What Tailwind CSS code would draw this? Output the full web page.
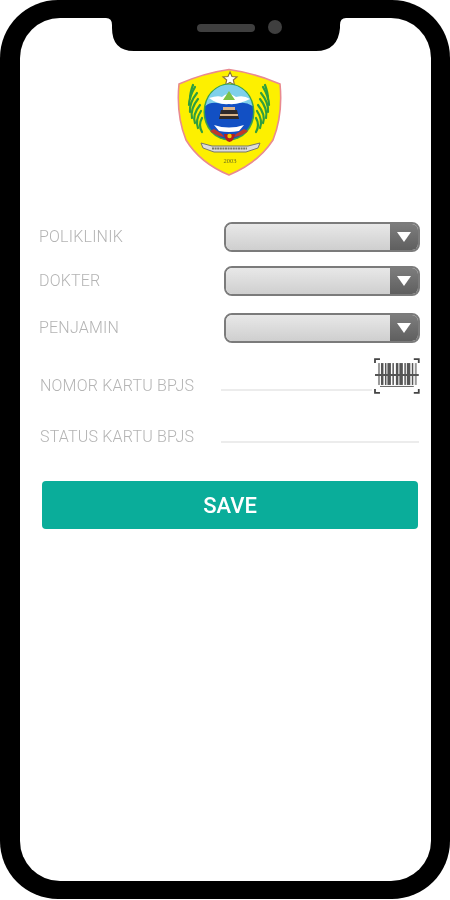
<!DOCTYPE html>
<html lang="id">
<head>
<meta charset="utf-8">
<title>Form</title>
<script src="https://cdn.jsdelivr.net/npm/@tailwindcss/browser@4"></script>
</head>
<body class="bg-white font-['Roboto',sans-serif]">
<div class="relative w-[450px] h-[899px] bg-black rounded-[58px] pt-[18px] pl-[20px] pr-[19px] pb-[18px]">
  <!-- notch -->
  <svg class="absolute left-[100px] top-0 w-[250px] h-[60px] blur-[0.4px]" viewBox="0 0 250 60">
    <path d="M5 0H245V18H246Q240 18 240 25V28Q238 51 216 51H34Q12 51 12 28V25Q12 18 6 18H5Z" fill="#000"/>
    <rect x="97" y="24" width="58" height="8" rx="4" fill="#3f3f3f"/>
    <circle cx="175" cy="27" r="7" fill="#3f3f3f"/>
  </svg>
  <div class="w-full h-full bg-white rounded-[40px] overflow-hidden">
    <!-- logo -->
    <div class="pt-[37px] pl-[140px] h-[204px]">
      <svg class="w-[140px] h-[130px] blur-[0.7px]" viewBox="0 0 140 130">
        <path d="M19 29Q44 18 69 14.5Q95 18 120 29Q123 60 113 85Q98 108 69 120Q40 108 26 85Q16 60 19 29Z" fill="#fdf000" stroke="#e98a90" stroke-width="1.6"/>
        <!-- wings -->
        <g fill="none" stroke="#2f9e3e" stroke-width="2.2" stroke-linecap="round">
          <path d="M33 30Q30 38 30 44"/>
          <path d="M35 32Q29 42 29 50"/>
          <path d="M37 38Q29 48 30 57"/>
          <path d="M38 44Q30 54 32 63"/>
          <path d="M40 50Q32 60 35 68"/>
          <path d="M41 56Q35 65 38 73"/>
          <path d="M42 63Q38 70 42 77"/>
          <path d="M105 30Q108 38 108 44"/>
          <path d="M103 32Q109 42 109 50"/>
          <path d="M101 38Q109 48 108 57"/>
          <path d="M100 44Q108 54 106 63"/>
          <path d="M98 50Q106 60 103 68"/>
          <path d="M97 56Q103 65 100 73"/>
          <path d="M96 63Q100 70 96 77"/>
        </g>
        <!-- star -->
        <path d="M70 17L72 21.5L77 22L73.3 25L74.5 30L70 27.3L65.5 30L66.7 25L63 22L68 21.5Z" fill="#fff" stroke="#8a6d3b" stroke-width="1.1"/>
        <!-- emblem -->
        <ellipse cx="69" cy="57" rx="25.5" ry="28.5" fill="#3aa24a"/>
        <ellipse cx="69" cy="57" rx="24" ry="27" fill="#1250c4"/>
        <path d="M45.5 51A24 27 0 0 1 92.5 51Q86 47 80 48Q75 49 69 49Q62 49 57 48Q50 47 45.5 51Z" fill="#7fd0ea"/>
        <path d="M49 43Q58 40 62 42Q68 36 76 42Q84 40 90 44Q78 50 69 49Q58 50 49 43Z" fill="#fff"/>
        <path d="M63 45L69 36L75 45Z" fill="#7cc243"/>
        <path d="M61 55H77L79 64H59Z" fill="#2f2a2a"/>
        <path d="M63 52H75V55H63ZM60 59H78V61H60Z" fill="#d9b48a"/>
        <path d="M54 70Q69 75 84 70L79 76Q69 78 59 76Z" fill="#fff"/>
        <path d="M50 76Q56 81 64 82L62 79L54 74ZM88 76Q82 81 74 82L76 79L84 74Z" fill="#c0392b"/>
        <path d="M64 79H75Q74 86 69.5 87Q65 86 64 79Z" fill="#b3201c"/>
        <circle cx="69.5" cy="81" r="2.2" fill="#f0d000"/>
        <!-- ribbon -->
        <path d="M41 88L52 91H88L100 88L98 93L86 97H54L43 93Z" fill="#ddd" stroke="#77776a" stroke-width="1"/>
        <path d="M52 93.5H87" stroke="#77776a" stroke-width="1.8" stroke-dasharray="2 .6"/>
        <text x="70" y="108" text-anchor="middle" font-family="'Liberation Serif',serif" font-size="6.5" fill="#6b6b1f">2003</text>
      </svg>
    </div>
    <!-- form -->
    <div class="flex flex-col text-[16px] font-light text-[#b4b4b4] tracking-[0.2px] blur-[0.5px]">
      <div class="flex items-center justify-between h-[30px] pl-[19px] pr-[11px]">
        <span>POLIKLINIK</span>
        <div class="flex w-[196px] h-[30px] rounded-[8px] border-2 border-[#7b7b7b] overflow-hidden">
          <div class="flex-1 bg-gradient-to-b from-[#e8e8e8] to-[#cfcfcf]"></div>
          <div class="flex items-center justify-center w-[28px] bg-gradient-to-b from-[#7d7d7d] to-[#5f5f5f]">
            <svg class="w-[14px] h-[10px]" viewBox="0 0 14 10"><path d="M0 0H14L7 10Z" fill="#fff"/></svg>
          </div>
        </div>
      </div>
      <div class="flex items-center justify-between h-[30px] mt-[14px] pl-[19px] pr-[11px]">
        <span>DOKTER</span>
        <div class="flex w-[196px] h-[30px] rounded-[8px] border-2 border-[#7b7b7b] overflow-hidden">
          <div class="flex-1 bg-gradient-to-b from-[#e8e8e8] to-[#cfcfcf]"></div>
          <div class="flex items-center justify-center w-[28px] bg-gradient-to-b from-[#7d7d7d] to-[#5f5f5f]">
            <svg class="w-[14px] h-[10px]" viewBox="0 0 14 10"><path d="M0 0H14L7 10Z" fill="#fff"/></svg>
          </div>
        </div>
      </div>
      <div class="flex items-center justify-between h-[30px] mt-[17px] pl-[19px] pr-[11px]">
        <span>PENJAMIN</span>
        <div class="flex w-[196px] h-[30px] rounded-[8px] border-2 border-[#7b7b7b] overflow-hidden">
          <div class="flex-1 bg-gradient-to-b from-[#e8e8e8] to-[#cfcfcf]"></div>
          <div class="flex items-center justify-center w-[28px] bg-gradient-to-b from-[#7d7d7d] to-[#5f5f5f]">
            <svg class="w-[14px] h-[10px]" viewBox="0 0 14 10"><path d="M0 0H14L7 10Z" fill="#fff"/></svg>
          </div>
        </div>
      </div>
      <div class="flex items-center h-[37px] mt-[14px] pl-[20px] pr-[11px]">
        <span class="w-[181px] shrink-0 mt-[20px]">NOMOR KARTU BPJS</span>
        <div class="w-[152px] h-[2px] bg-[#ececec] mt-[28px]"></div>
        <svg class="ml-[2px] w-[46px] h-[36px]" viewBox="0 0 46 36">
          <path d="M1 5V1H6M40 1H45V5M1 31V35H6M40 35H45V31" fill="none" stroke="#444" stroke-width="1.8"/>
          <g fill="#555">
            <rect x="4" y="5" width="2" height="22" fill="#999"/><rect x="7" y="5" width="2.5" height="22"/><rect x="11" y="5" width="1.5" height="22"/><rect x="13.5" y="5" width="3.5" height="22"/><rect x="18.5" y="5" width="1.5" height="22"/><rect x="22" y="5" width="2.5" height="22"/><rect x="25.5" y="5" width="3.5" height="22"/><rect x="30.5" y="5" width="1.5" height="22"/><rect x="33" y="5" width="3.5" height="22"/><rect x="38" y="5" width="1.5" height="22"/><rect x="41" y="5" width="2" height="22" fill="#999"/>
          </g>
          <rect x="1" y="16" width="44" height="2" fill="#555"/>
          <rect x="6" y="28" width="34" height="1" fill="#666"/>
        </svg>
      </div>
      <div class="flex items-center h-[30px] mt-[28px] pl-[20px] pr-[12px]">
        <span class="w-[181px] shrink-0">STATUS KARTU BPJS</span>
        <div class="flex-1 h-[2px] bg-[#ececec] mt-[10px]"></div>
      </div>
      <button class="mt-[29px] ml-[22px] w-[376px] h-[48px] rounded-[4px] bg-[#0aad9a] text-white text-[22px] font-medium tracking-normal">SAVE</button>
    </div>
  </div>
</div>
</body>
</html>
